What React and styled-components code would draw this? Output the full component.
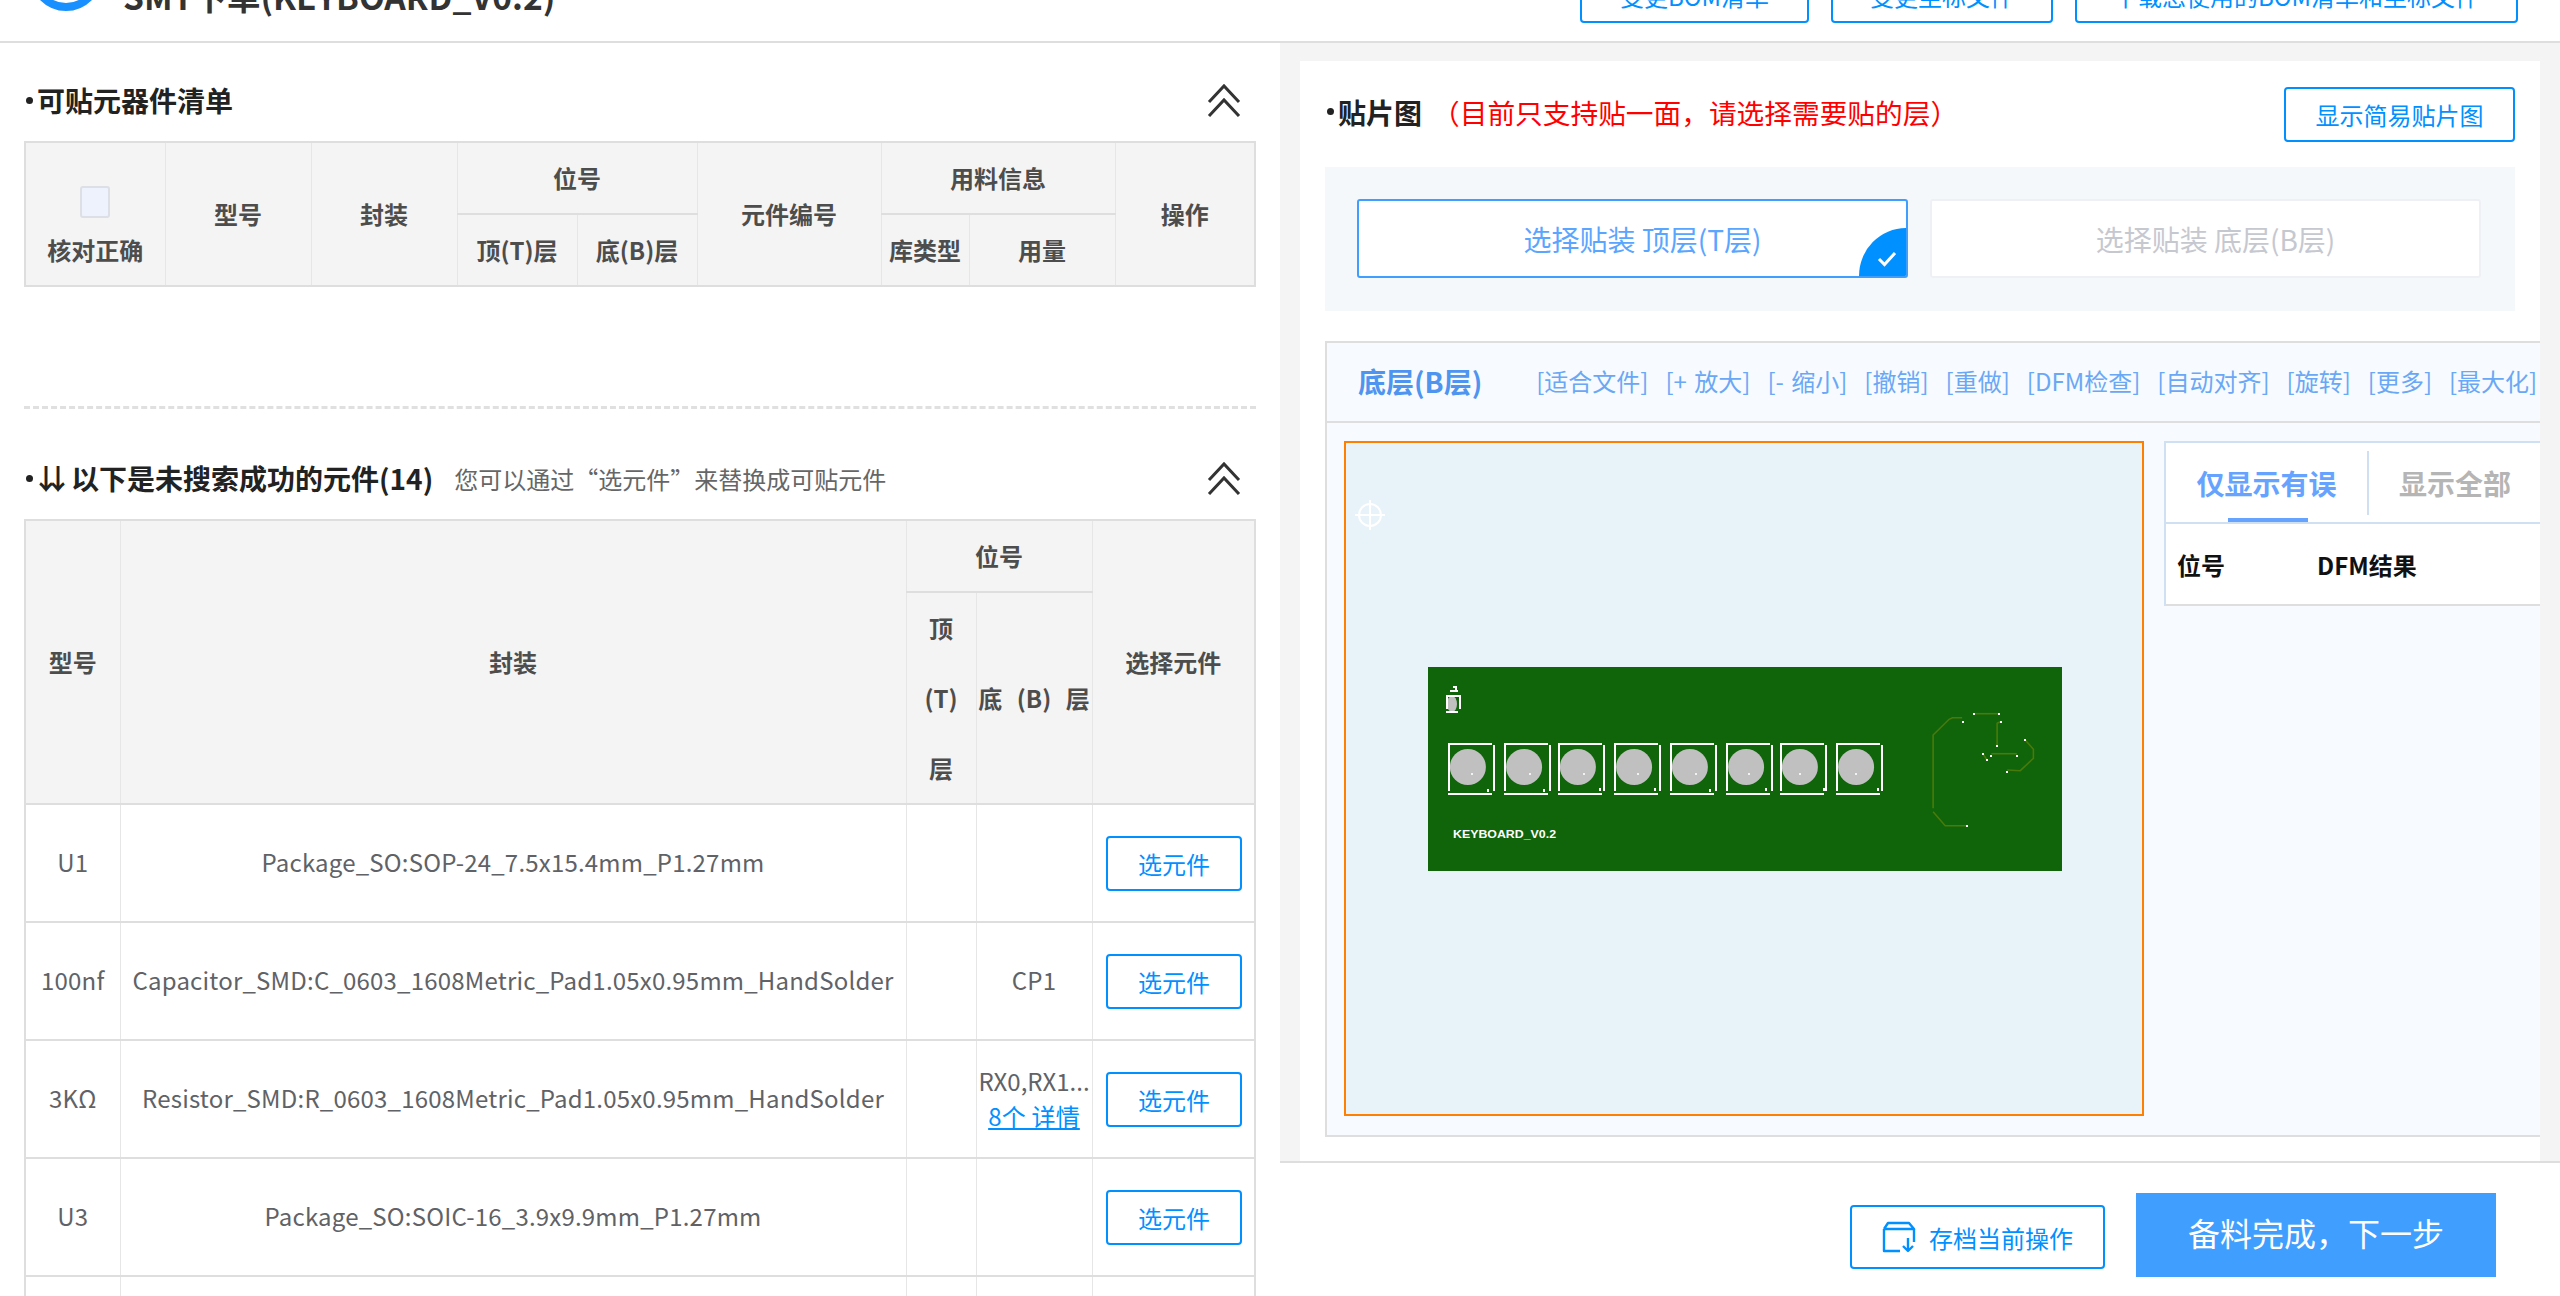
import React from "react";
import styled, { createGlobalStyle } from "styled-components";

const FONT = `"Noto Sans CJK SC", "Noto Sans", sans-serif`;
const BLUE = "#0090ff";
const LINE = "#dedede";

const Global = createGlobalStyle`
  html, body { margin: 0; padding: 0; background: #fff; }
  * { box-sizing: border-box; }
  body { font-family: ${FONT}; }
`;

const Page = styled.div`
  width: 2560px; height: 1296px; overflow: hidden; background: #fff;
  display: flex; flex-direction: column;
`;
const Header = styled.header`
  height: 43px; flex: none; border-bottom: 2px solid ${LINE};
  display: flex; align-items: flex-end; overflow: hidden;
  padding: 0 42px 18px 30px;
`;
const Logo = styled.svg`
  width: 72px; height: 72px; flex: none; margin-bottom: 12px; margin-right: 21px;
`;
const OrderTitle = styled.div`
  height: 55px; line-height: 55px; font-size: 33.500px; font-weight: 700; color: #333; white-space: nowrap;
`;
const HeaderActions = styled.div`
  margin-left: auto; display: flex; gap: 22px;
`;
const OutlineButton = styled.button`
  height: 55px; width: ${(p) => p.$w}px; flex: none; padding: 0;
  border: 2px solid ${BLUE}; border-radius: 4px; background: #fff;
  color: ${BLUE}; font: 400 24px ${FONT}; white-space: nowrap;
  display: flex; align-items: center; justify-content: center;
`;
const Columns = styled.div`
  flex: 1; display: flex; min-height: 0;
`;
const LeftPane = styled.section`
  width: 1280px; flex: none; padding: 0 24px 0 24px; overflow: hidden;
`;
const SectionHead = styled.div`
  height: ${(p) => p.$h}px; padding-top: ${(p) => p.$top}px;
  display: flex; align-items: flex-start;
`;
const TitleLine = styled.div`
  display: flex; align-items: center; height: 40px; width: 100%;
`;
const Bullet = styled.i`
  width: 7px; height: 7px; border-radius: 50%; background: #222; flex: none;
  margin: 0 ${(p) => p.$gap}px 0 2px;
`;
const Title = styled.h2`
  margin: 0; font-size: 28px; font-weight: 700; color: #222; white-space: nowrap;
`;
const Arrows = styled.span`
  letter-spacing: -16px; margin: 0 15px 0 -5px;
`;
const Hint = styled.span`
  font-size: 24px; color: #666; margin-left: 21px; white-space: nowrap;
`;
const Collapse = styled.svg`
  margin-left: auto; margin-right: 15px; width: 34px; height: 34px; flex: none;
`;
const Grid = styled.table`
  width: 1230px; table-layout: fixed; border-collapse: collapse; font-size: 24px;
  border: 2px solid ${LINE};
`;
const Th = styled.th`
  background: #f4f4f4; color: #4d4d4d; font-weight: 700; padding: 0;
  line-height: ${(p) => (p.$top ? 64 : 70)}px; text-align: center; vertical-align: ${(p) => (p.$top ? "top" : "middle")};
  word-spacing: ${(p) => (p.$spaced ? 9 : 0)}px;
  border: 1px solid #e6e6e6;
  border-top: 2px solid ${LINE}; border-bottom: 2px solid ${LINE};
`;
const Td = styled.td`
  height: 118px; padding: 0 0 3px; text-align: center; color: #606266; line-height: 35px; white-space: nowrap;
  letter-spacing: 0.2px;
  border: 1px solid #e6e6e6; border-bottom: 2px solid ${LINE}; border-top: 2px solid ${LINE};
  overflow: hidden;
`;
const CheckBox = styled.span`
  display: block; width: 30px; height: 32px; margin: 43px auto 0;
  background: #edf2fc; border: 2px solid #dcdfe6; border-radius: 3px;
`;
const RefList = styled.div`
  overflow: hidden; white-space: nowrap; letter-spacing: 0;
`;
const Detail = styled.a`
  color: ${BLUE}; text-decoration: underline;
`;
const PickButton = styled(OutlineButton)`
  margin: 3px 12px 0 auto; letter-spacing: 0;
`;
const DashRule = styled.div`
  border-top: 3px dashed #e0e0e0; margin-top: 119px;
`;
const RightPane = styled.section`
  width: 1280px; flex: none; display: flex; flex-direction: column; min-height: 0;
`;
const RightMain = styled.div`
  height: 1118px; flex: none; background: #f4f4f4; padding: 18px 20px 0;
`;
const Card = styled.div`
  height: 100%; background: #fff; padding: 26px 25px 0; overflow: hidden;
`;
const CardHead = styled.div`
  height: 55px; display: flex; align-items: center;
`;
const CardTitle = styled.div`
  display: flex; align-items: center; margin-bottom: 6px;
`;
const Warn = styled.span`
  font-size: 27.700px; color: #f00; margin-left: 10px; white-space: nowrap;
`;
const CardHeadButton = styled(OutlineButton)`
  margin-left: auto;
`;
const LayerBox = styled.div`
  margin-top: 25px; height: 144px; background: #f5f8fa; padding: 32px 34px 0 32px;
  display: flex; gap: 22px;
`;
const LayerOption = styled.div`
  position: relative; flex: 1; height: 79px; background: #fff; overflow: hidden;
  border: 2px solid ${(p) => (p.$on ? "#409eff" : "#eef0f5")}; border-radius: 3px;
  color: ${(p) => (p.$on ? "#5aa6ff" : "#c6c8d0")}; padding-left: 20px;
  font-size: 28px; display: flex; align-items: center; justify-content: center; white-space: nowrap;
`;
const Corner = styled.div`
  position: absolute; right: 0; bottom: 0; width: 47px; height: 48px; background: ${BLUE};
  border-top-left-radius: 100%;
  display: flex; align-items: flex-end; justify-content: flex-end; padding: 0 9px 9px 0;
`;
const Viewer = styled.div`
  margin: 30px -25px 0 0; height: 796px; background: #f7fbff;
  border: 2px solid ${LINE}; border-right: 0; overflow: hidden;
`;
const ViewerHead = styled.div`
  height: 80px; border-bottom: 2px solid ${LINE}; display: flex; align-items: center; padding: 0 0 3px 31px;
  white-space: nowrap;
`;
const LayerName = styled.strong`
  font-size: 28px; color: #4f94ef; margin-right: 54px;
`;
const ToolLinks = styled.div`
  display: flex; gap: 17px; font-size: 24px; color: #6aa8f5; word-spacing: 2px;
`;
const ViewerBody = styled.div`
  display: flex; gap: 20px; padding: 18px 0 0 17px;
`;
const Canvas = styled.div`
  position: relative; width: 800px; height: 675px; flex: none; background: #e8f3f9;
  border: 2px solid #ff8000; padding: 224px 0 0 82px;
`;
const Crosshair = styled.svg`
  position: absolute; left: 9px; top: 57px; width: 30px; height: 30px;
`;
const Board = styled.svg`
  display: block; width: 634px; height: 204px; background: #10640a;
`;
const DfmPanel = styled.div`
  width: 400px; height: 165px; flex: none; background: #fff;
  border: 2px solid #cfe0f3; border-bottom-color: ${LINE}; border-right: 0;
`;
const DfmTabs = styled.div`
  height: 81px; display: flex; border-bottom: 2px solid #cfe0f3; align-items: stretch;
`;
const DfmTab = styled.div`
  position: relative; width: ${(p) => p.$w}px; flex: none; display: flex; align-items: center; justify-content: center;
  font-size: 28px; font-weight: 700; color: ${(p) => (p.$on ? "#66a3ff" : "#b5b5b5")};
  &::after {
    content: ""; display: ${(p) => (p.$on ? "block" : "none")};
    position: absolute; left: 62px; bottom: 0; width: 80px; height: 4px; background: #66a3ff;
  }
`;
const TabDivider = styled.i`
  width: 2px; height: 64px; margin-top: 8px; background: #cfe0f3; flex: none;
`;
const DfmRow = styled.div`
  height: 80px; display: flex; align-items: center; font-size: 24px; font-weight: 700; color: #111;
`;
const DfmCell = styled.span`
  width: ${(p) => p.$w}px; padding-left: 11px; flex: none;
`;
const Footer = styled.footer`
  flex: 1; border-top: 2px solid ${LINE}; background: #fff;
  display: flex; justify-content: flex-end; align-items: flex-start; gap: 31px; padding: 30px 64px 0 0;
`;
const SaveButton = styled.button`
  margin-top: 12px; width: 255px; height: 64px; flex: none; padding: 0 0 0 30px; gap: 13px;
  border: 2px solid ${BLUE}; border-radius: 4px; background: #fff; color: ${BLUE};
  font: 400 24px ${FONT}; display: flex; align-items: center; white-space: nowrap;
`;
const NextButton = styled.button`
  width: 360px; height: 84px; flex: none; border: 0; background: #409eff; color: #fff; padding: 0 0 6px;
  font: 400 32px ${FONT}; white-space: nowrap;
`;

const DoubleUp = () => (
  <Collapse viewBox="0 0 34 34" fill="none" stroke="#333" strokeWidth="3">
    <path d="M2 19 17 3 32 19" />
    <path d="M2 33 17 17 32 33" />
  </Collapse>
);

const Z = (x, y) => [+(x / 2.063 - 108.1).toFixed(1), +(y / 3 - 27).toFixed(1)];
const poly = (pts) => pts.map((p) => Z(p[0], p[1]).join(",")).join(" ");

const PADS = [
  [264, 344, 447], [380, 460, 447], [491, 576, 443], [607, 690, 443],
  [722, 802, 447], [838, 918, 443], [949, 1038, 443], [1065, 1150, 443],
];
const DOTS = [311, 431, 543, 654, 773, 884, 988, 1104];
const TRACES = [
  [[1325, 233], [1305, 233], [1298, 238], [1265, 285], [1265, 505]],
  [[1265, 515], [1290, 557], [1335, 557]],
  [[1350, 221], [1400, 221]],
  [[1404, 245], [1397, 250], [1397, 318]],
  [[1455, 300], [1472, 328], [1472, 355], [1445, 392], [1418, 390]],
  [[1385, 341], [1438, 341]],
  [[1368, 341], [1376, 360]],
];
const TRACE_DOTS = [[1327, 245], [1335, 557], [1350, 221], [1400, 221], [1404, 245], [1397, 318], [1455, 300], [1417, 395], [1384, 347], [1438, 347], [1368, 341], [1376, 360]];

const PcbDrawing = () => (
  <Board viewBox="0 0 634 204" shapeRendering="crispEdges">
    <ellipse cx="24" cy="37" rx="5" ry="8" fill="#c0c0c0" shapeRendering="auto" />
    <g fill="none" stroke="#fff" strokeWidth="2">
      <path d="M19 42V29H32V42" />
      <path d="M18 45H30" />
      <path d="M22 24h8M25 20h3v3" />
    </g>
    {PADS.map(([x, tx, ty], i) => {
      const [l] = Z(x, 0);
      const [dx] = Z(DOTS[i], 0);
      const [tickX, tickY] = Z(tx, ty);
      return (
        <g key={x}>
          <path d={`M${l + 1} 124V77H${l + 44}M${l + 46} 78V124M${l} 127H${l + 44}`} fill="none" stroke="#fff" strokeWidth="2" />
          <circle cx={l + 20} cy="100" r="18" fill="#c0c0c0" shapeRendering="auto" />
          <rect x={dx} y="106" width="2" height="2" fill="#f2f2f2" />
          <rect x={tickX} y={tickY} width="2" height="3" fill="#fff" />
        </g>
      );
    })}
    {TRACES.map((t) => (
      <polyline key={t[0].join()} points={poly(t)} fill="none" stroke="#4a7a0a" strokeWidth="1.6" shapeRendering="auto" />
    ))}
    {TRACE_DOTS.map((d) => {
      const [x, y] = Z(d[0], d[1]);
      return <rect key={d.join()} x={x - 1} y={y - 1} width="2" height="2" fill="#fff" />;
    })}
    <text x="25" y="171" fontFamily="Liberation Sans, sans-serif" fontSize="10" fontWeight="700" fill="#fff" textLength="103" lengthAdjust="spacingAndGlyphs">KEYBOARD_V0.2</text>
  </Board>
);

const ROWS = [
  ["U1", "Package_SO:SOP-24_7.5x15.4mm_P1.27mm", null],
  ["100nf", "Capacitor_SMD:C_0603_1608Metric_Pad1.05x0.95mm_HandSolder", "CP1"],
  ["3KΩ", "Resistor_SMD:R_0603_1608Metric_Pad1.05x0.95mm_HandSolder", "many"],
  ["U3", "Package_SO:SOIC-16_3.9x9.9mm_P1.27mm", null],
];
const TOOLS = ["[适合文件]", "[+ 放大]", "[- 缩小]", "[撤销]", "[重做]", "[DFM检查]", "[自动对齐]", "[旋转]", "[更多]", "[最大化]"];

export default function App() {
  return (
    <Page>
      <Global />
      <Header>
        <Logo viewBox="0 0 72 72" fill="none" stroke="#1890ff" strokeWidth="8">
          <circle cx="36" cy="36" r="32" />
        </Logo>
        <OrderTitle>SMT下单(KEYBOARD_V0.2)</OrderTitle>
        <HeaderActions>
          <OutlineButton $w={229}>变更BOM清单</OutlineButton>
          <OutlineButton $w={222}>变更坐标文件</OutlineButton>
          <OutlineButton $w={443}>下载您使用的BOM清单和坐标文件</OutlineButton>
        </HeaderActions>
      </Header>
      <Columns>
        <LeftPane>
          <SectionHead $h={98} $top={37}>
            <TitleLine>
              <Bullet $gap={4} />
              <Title>可贴元器件清单</Title>
              <DoubleUp />
            </TitleLine>
          </SectionHead>
          <Grid>
            <colgroup>
              {[140, 146, 146, 120, 120, 184, 88, 146, 140].map((w, i) => <col key={i} style={{ width: w }} />)}
            </colgroup>
            <thead>
              <tr>
                <Th rowSpan={2} $top><CheckBox />核对正确</Th>
                <Th rowSpan={2}>型号</Th>
                <Th rowSpan={2}>封装</Th>
                <Th colSpan={2}>位号</Th>
                <Th rowSpan={2}>元件编号</Th>
                <Th colSpan={2}>用料信息</Th>
                <Th rowSpan={2}>操作</Th>
              </tr>
              <tr>
                <Th>顶(T)层</Th>
                <Th>底(B)层</Th>
                <Th>库类型</Th>
                <Th>用量</Th>
              </tr>
            </thead>
          </Grid>
          <DashRule />
          <SectionHead $h={110} $top={49}>
            <TitleLine>
              <Bullet $gap={4} />
              <Title><Arrows>↓↓</Arrows>以下是未搜索成功的元件(14)</Title>
              <Hint>您可以通过“选元件”来替换成可贴元件</Hint>
              <DoubleUp />
            </TitleLine>
          </SectionHead>
          <Grid>
            <colgroup>
              {[95, 786, 70, 116, 163].map((w, i) => <col key={i} style={{ width: w }} />)}
            </colgroup>
            <thead>
              <tr>
                <Th rowSpan={2}>型号</Th>
                <Th rowSpan={2}>封装</Th>
                <Th colSpan={2}>位号</Th>
                <Th rowSpan={2}>选择元件</Th>
              </tr>
              <tr>
                <Th $spaced>顶 (T) 层</Th>
                <Th $spaced>底 (B) 层</Th>
              </tr>
            </thead>
            <tbody>
              {ROWS.map(([model, pkg, refs]) => (
                <tr key={model}>
                  <Td>{model}</Td>
                  <Td>{pkg}</Td>
                  <Td />
                  <Td>
                    {refs === "many" ? (
                      <>
                        <RefList>RX0,RX1...</RefList>
                        <Detail>8个 详情</Detail>
                      </>
                    ) : refs}
                  </Td>
                  <Td><PickButton $w={136}>选元件</PickButton></Td>
                </tr>
              ))}
              <tr>
                <Td /><Td /><Td /><Td /><Td />
              </tr>
            </tbody>
          </Grid>
        </LeftPane>
        <RightPane>
          <RightMain>
            <Card>
              <CardHead>
                <CardTitle>
                  <Bullet $gap={4} />
                  <Title>贴片图</Title>
                  <Warn>（目前只支持贴一面，请选择需要贴的层）</Warn>
                </CardTitle>
                <CardHeadButton $w={231}>显示简易贴片图</CardHeadButton>
              </CardHead>
              <LayerBox>
                <LayerOption $on>
                  选择贴装 顶层(T层)
                  <Corner>
                    <svg width="20" height="16" viewBox="0 0 20 16" fill="none" stroke="#fff" strokeWidth="3">
                      <path d="M2 8 7.500 13.500 18 2" />
                    </svg>
                  </Corner>
                </LayerOption>
                <LayerOption>选择贴装 底层(B层)</LayerOption>
              </LayerBox>
              <Viewer>
                <ViewerHead>
                  <LayerName>底层(B层)</LayerName>
                  <ToolLinks>
                    {TOOLS.map((t) => <span key={t}>{t}</span>)}
                  </ToolLinks>
                </ViewerHead>
                <ViewerBody>
                  <Canvas>
                    <Crosshair viewBox="0 0 30 30" fill="none" stroke="#fff" strokeWidth="2">
                      <circle cx="15" cy="15" r="11" />
                      <path d="M0 15H30M15 0V30" />
                    </Crosshair>
                    <PcbDrawing />
                  </Canvas>
                  <DfmPanel>
                    <DfmTabs>
                      <DfmTab $on $w={201}>仅显示有误</DfmTab>
                      <TabDivider />
                      <DfmTab $w={172}>显示全部</DfmTab>
                    </DfmTabs>
                    <DfmRow>
                      <DfmCell $w={140}>位号</DfmCell>
                      <DfmCell $w={200}>DFM结果</DfmCell>
                    </DfmRow>
                  </DfmPanel>
                </ViewerBody>
              </Viewer>
            </Card>
          </RightMain>
          <Footer>
            <SaveButton>
              <svg width="34" height="34" viewBox="0 0 34 34" fill="none" stroke={BLUE} strokeWidth="2.400" strokeLinejoin="round">
                <path d="M2 9V31H18" />
                <path d="M2 9 6 3H27L32 9H2" />
                <path d="M32 9V22" />
                <path d="M26 18V31M21 26 26 31 31 26" />
              </svg>
              存档当前操作
            </SaveButton>
            <NextButton>备料完成，下一步</NextButton>
          </Footer>
        </RightPane>
      </Columns>
    </Page>
  );
}
